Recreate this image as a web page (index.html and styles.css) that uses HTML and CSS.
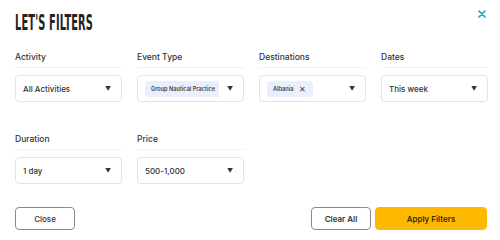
FILE: index.html
```html
<!DOCTYPE html>
<html>
<head>
<meta charset="utf-8">
<link rel="stylesheet" href="styles.css">
</head>
<body>
<div class="modal">
  <div class="header">
    <h1 class="title">LET'S FILTERS</h1>
    <button class="close-x" aria-label="Close">
      <svg width="8" height="8" viewBox="0 0 8 8"><path d="M1 1L7 7M7 1L1 7" stroke="#1a9ad6" stroke-width="1.6" stroke-linecap="round"/></svg>
    </button>
  </div>
  <div class="grid">
    <div class="field">
      <div class="label">Activity</div>
      <div class="select"><span class="value">All Activities</span><span class="arrow">▼</span></div>
    </div>
    <div class="field">
      <div class="label">Event Type</div>
      <div class="select"><span class="chip chip-cut">Group Nautical Practice</span><span class="arrow">▼</span></div>
    </div>
    <div class="field">
      <div class="label">Destinations</div>
      <div class="select"><span class="chip">Albania <span class="chip-x">✕</span></span><span class="arrow">▼</span></div>
    </div>
    <div class="field">
      <div class="label">Dates</div>
      <div class="select"><span class="value">This week</span><span class="arrow">▼</span></div>
    </div>
    <div class="field">
      <div class="label">Duration</div>
      <div class="select"><span class="value">1 day</span><span class="arrow">▼</span></div>
    </div>
    <div class="field">
      <div class="label">Price</div>
      <div class="select"><span class="value">500-1,000</span><span class="arrow">▼</span></div>
    </div>
  </div>
  <div class="footer">
    <button class="btn btn-outline btn-close">Close</button>
    <div class="footer-right">
      <button class="btn btn-outline btn-clear">Clear All</button>
      <button class="btn btn-primary">Apply Filters</button>
    </div>
  </div>
</div>
</body>
</html>
```
FILE: styles.css
```css
* { box-sizing: border-box; }
html, body { margin: 0; background: #fff; }
body { font-family: Inter, "Noto Sans", sans-serif; color: #2a2a2a; }
.modal { width: 500px; height: 240px; padding: 10px 13px 10px 15px; display: flex; flex-direction: column; }
.header { display: flex; justify-content: space-between; align-items: flex-start; height: 37px; }
.title { margin: 2px 0 0; font-family: "DejaVu Sans Condensed", "DejaVu Sans", sans-serif; font-weight: 700; font-size: 21px; letter-spacing: 0.3px; line-height: 22px; color: #222; transform: scaleX(0.52); transform-origin: left center; white-space: nowrap; }
.close-x { border: 0; background: none; padding: 0; margin: -1px 0 0; width: 10px; height: 10px; display: flex; align-items: center; justify-content: center; cursor: pointer; }
.grid { display: grid; grid-template-columns: repeat(4, 107px); column-gap: 15px; row-gap: 27px; }
.field { display: flex; flex-direction: column; }
.label { font-size: 8.5px; font-weight: 500; color: #333; height: 21px; line-height: 20px; border-bottom: 1px solid #f1f2f6; margin-bottom: 7px; }
.select { height: 27px; border: 1px solid #e2e3e6; border-radius: 4px; display: flex; align-items: center; justify-content: space-between; padding: 0 10px 0 7px; }
.value { font-size: 8px; font-weight: 500; color: #333; }
.arrow { font-size: 6px; color: #333; }
.chip { background: #e9effc; border-radius: 4px; font-size: 5.6px; font-weight: 600; color: #444; height: 16px; display: inline-flex; align-items: center; padding: 0 6px; white-space: nowrap; }
.chip-cut { padding: 0 4px 0 6px; border-radius: 4px 0 0 4px; }
.chip-x { font-size: 8px; margin-left: 6px; font-weight: 400; margin-right: 1px; }
.footer { margin-top: auto; display: flex; justify-content: space-between; align-items: center; }
.footer-right { display: flex; gap: 4px; }
.btn { height: 23px; border-radius: 4px; font-family: Inter, "Noto Sans", sans-serif; font-size: 8px; font-weight: 600; color: #333; cursor: pointer; }
.btn-outline { background: #fff; border: 1px solid #8a8a8a; }
.btn-close { width: 60px; font-weight: 500; }
.btn-clear { width: 60px; }
.btn-primary { width: 112px; background: #ffb800; border: 1px solid #ffb800; color: #3a2a00; }
```
